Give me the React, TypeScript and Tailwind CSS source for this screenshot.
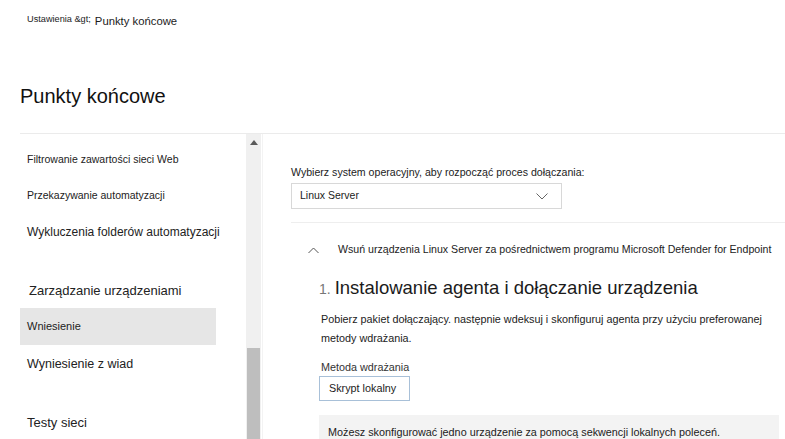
export default function App() {
  return (
    <div className="w-[785px] h-[439px] overflow-hidden bg-white text-[#1b1b1b] font-['Liberation_Sans',Arial,sans-serif]">
      {/* breadcrumb */}
      <div className="flex items-end h-[29px] pl-[27px]">
        <span className="text-[9.2px] leading-none mb-[5px]">Ustawienia &amp;gt;</span>
        <span className="text-[11.3px] leading-none ml-[4px] mb-[2px]">Punkty końcowe</span>
      </div>
      <h1 className="mt-[55px] pl-[20px] text-[20px] leading-[24px] text-[#111]">Punkty końcowe</h1>

      <div className="mt-[25px] ml-[20px] border-t border-[#ebebeb] flex h-[306px]">
        {/* left nav */}
        <nav className="w-[226px] shrink-0 text-[#222]">
          <div className="h-[8px]" />
          <div className="h-9 flex items-center pl-[7px] text-[10.5px]">Filtrowanie zawartości sieci Web</div>
          <div className="h-9 flex items-center pl-[7px] text-[10.5px]">Przekazywanie automatyzacji</div>
          <div className="h-9 flex items-center pl-[7px] text-[12px]">Wykluczenia folderów automatyzacji</div>
          <div className="h-[23px]" />
          <div className="h-[35px] flex items-center pl-[9px] text-[13px]">Zarządzanie urządzeniami</div>
          <div className="h-[37px] w-[196px] flex items-center pl-[7px] text-[11px] bg-[#e6e6e6]">Wniesienie</div>
          <div className="h-[38px] flex items-center pl-[7px] text-[12.5px]">Wyniesienie z wiad</div>
          <div className="h-[22px]" />
          <div className="h-9 flex items-center pl-[7px] text-[13px]">Testy sieci</div>
        </nav>

        {/* scrollbar */}
        <div className="w-[15px] shrink-0 bg-[#f0f0f0] flex flex-col items-center">
          <svg width="8" height="5" viewBox="0 0 8 5" className="mt-[6px]">
            <polygon points="4,0 8,5 0,5" fill="#5a5a5a" />
          </svg>
          <div className="mt-auto w-[13px] h-[91px] bg-[#bebebe]" />
        </div>

        {/* right panel */}
        <div className="flex-1 border-l border-[#f3f3f3] ml-px">
          <div className="pl-[28px]">
            <div className="mt-[31px] text-[10.6px] leading-[14px] text-[#222]">
              Wybierz system operacyjny, aby rozpocząć proces dołączania:
            </div>
            <div className="mt-[4px] w-[271px] h-[26px] border border-[#d8d8d8] flex items-center justify-between pl-[8px] pr-[13px] text-[10.5px]">
              <span>Linux Server</span>
              <svg width="12" height="7" viewBox="0 0 12 7">
                <polyline points="0.5,0.5 6,6 11.5,0.5" fill="none" stroke="#666" strokeWidth="1" />
              </svg>
            </div>
            <div className="mt-[13px] border-t border-[#eeeeee]" />

            <div className="mt-[20px] flex items-center h-[14px]">
              <svg width="11" height="7" viewBox="0 0 11 7" className="ml-[17px]">
                <polyline points="0.5,6 5.5,1 10.5,6" fill="none" stroke="#555" strokeWidth="1" />
              </svg>
              <span className="ml-[19px] text-[10.6px] text-[#222]">
                Wsuń urządzenia Linux Server za pośrednictwem programu Microsoft Defender for Endpoint
              </span>
            </div>

            <div className="pl-[28px]">
              <div className="mt-[17px] flex items-baseline h-[22px]">
                <span className="text-[14px] text-[#777]">1.</span>
                <span className="ml-[4px] text-[18.5px] text-[#1b1b1b]">Instalowanie agenta i dołączanie urządzenia</span>
              </div>
              <p className="mt-[14px] pl-[2px] text-[10.8px] leading-[19px] text-[#222] w-[460px]">
                Pobierz pakiet dołączający. następnie wdeksuj i skonfiguruj agenta przy użyciu preferowanej metody wdrażania.
              </p>
              <div className="mt-[12px] pl-[2px] text-[10.8px] leading-[14px] text-[#333]">Metoda wdrażania</div>
              <div className="mt-[2px] w-[91px] h-[25px] border border-[#a8c0d8] flex items-center pl-[9px] text-[10.8px]">
                Skrypt lokalny
              </div>
              <div className="mt-[14px] w-[460px] h-[40px] bg-[#f3f3f3] pl-[9px] pt-[11px] text-[10.8px] leading-[13px] text-[#222]">
                Możesz skonfigurować jedno urządzenie za pomocą sekwencji lokalnych poleceń.
              </div>
            </div>
          </div>
        </div>
      </div>
    </div>
  );
}
